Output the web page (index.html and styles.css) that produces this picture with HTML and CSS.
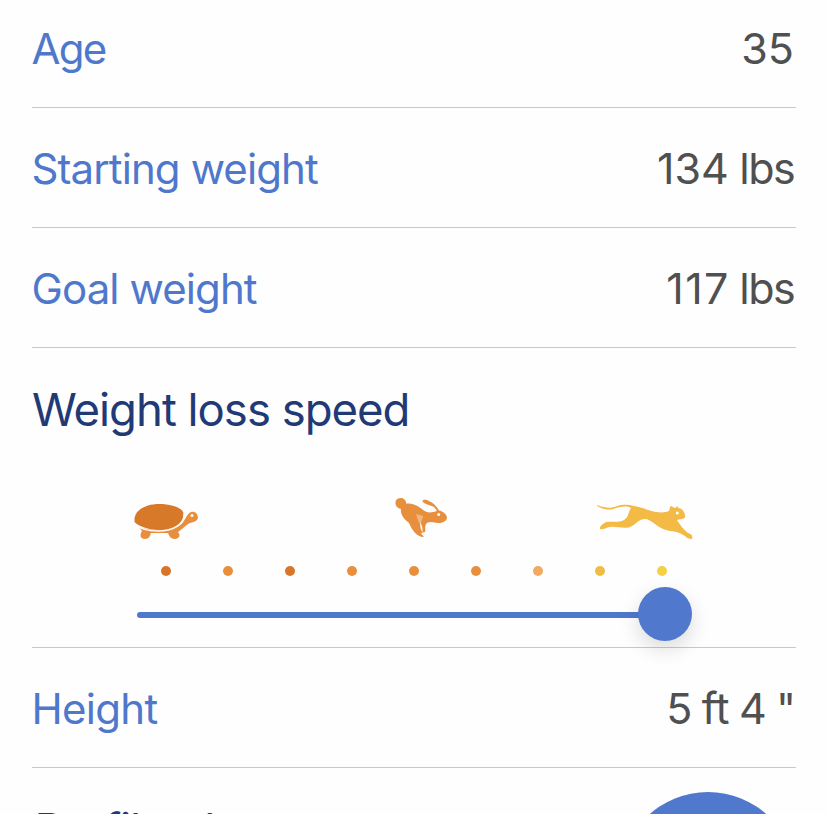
FILE: index.html
```html
<!DOCTYPE html>
<html lang="en">
<head>
<meta charset="utf-8">
<title>Profile</title>
<link rel="stylesheet" href="styles.css">
</head>
<body>
<main class="profile">
  <div class="row row-first"><span class="label age">Age</span><span class="value">35</span></div>
  <div class="row"><span class="label">Starting weight</span><span class="value">134 <span class="unit">lbs</span></span></div>
  <div class="row"><span class="label">Goal weight</span><span class="value goal">117 <span class="unit">lbs</span></span></div>
  <section class="speed">
    <h2 class="heading">Weight loss speed</h2>
    <div class="animals">
      <svg class="turtle" width="68" height="44" viewBox="132 498 68 44">
        <path fill="#e88f3d" d="M139 527C154 532 169 530 180 525C185 522 186 514 191 512C195 511 198 514 198 518C197 522 192 522 188 524C184 527 181 530 178 532C181 535 179 539 175 539C171 539 169 536 168 533L151 533C150 536 149 539 145 539C141 539 139 536 142 531Z"/>
        <path fill="#d87929" d="M134.500 518C136 509 147 504 159 504C172 504 182 508 183.500 513C184 524 174 530 158 530C149 530 138 526 134.500 522Z"/>
        <path fill="none" stroke="#fefefe" stroke-width="1.500" d="M134 524C140 529 149 531 158 531C174 531 185 524 184.300 513"/>
        <circle cx="192" cy="515.500" r="1.500" fill="#fff"/>
      </svg>
      <svg class="rabbit" width="56" height="44" viewBox="393 496 56 44">
        <path fill="#e88f3d" d="M401 498C404 498 406.500 501 406 503.500C413 503 418 506 422 509C425 512 429 513 433 512C436 511.500 437 511 436.500 510L434 507C430 505 424 504 422.500 501.500C422 499.500 426 499 429 501C434 503 437 507 439 510.500C443 511 447 515 447 517.500C447 521 443 523 438 523C434 523 431 521 427 523C424 525 426 530 425 532L421 533C422 535 424 536 423.500 537C417 537 412 530 409 523C405 520 400 515 401 509C397 508 395 505 395.500 502C396 499 398 498 401 498Z"/>
        <path fill="#fff" opacity=".35" d="M416 514L423 516C423 519 421 520 421 524L419 523Z"/>
        <path fill="#fff" opacity=".9" d="M420 522C422 525 423 529 422.500 532.500C420.500 530 420 526 420 522Z"/>
        <circle cx="438.700" cy="514.500" r="1.500" fill="#fff"/>
      </svg>
      <svg class="cheetah" width="100" height="42" viewBox="595 500 100 42">
        <path fill="#f3ba45" d="M597 505C605 508 611 509 617 506C623 504 629 505 634 506C643 507 648 511 656 512C662 513 667 512 669 511C670 508 670 506 671 506L675 508L678 506L678 508C682 508 684 511 685 515C686 519 683 519 677 520C680 525 685 531 688 533C692 534 693 537 692 539C688 539 686 537 685 536C682 534 676 531 670 531C665 530 660 528 655 524C651 521 648 519 645 519C639 519 636 524 632 526C626 530 617 526 610 527C607 527 605 530 600 529C599 527 602 524 606 522C613 521 618 523 624 520C629 517 628 512 631 508C626 505 620 507 616 508C609 511 602 509 597 506Z"/>
        <circle cx="677.300" cy="513" r="1.500" fill="#fff"/>
      </svg>
    </div>
    <div class="dots">
      <i class="dot dark"></i><i class="dot"></i><i class="dot dark"></i><i class="dot"></i><i class="dot"></i><i class="dot"></i><i class="dot peach"></i><i class="dot amber"></i><i class="dot yellow"></i>
    </div>
    <div class="slider"><div class="track"></div><div class="thumb"></div></div>
  </section>
  <div class="row"><span class="label tall">Height</span><span class="value feet">5 ft 4 "</span></div>
  <section class="photo">
    <h2 class="photo-title">Profile photo</h2>
    <div class="avatar"></div>
  </section>
</main>
</body>
</html>
```
FILE: styles.css
```css
* { box-sizing: border-box; }
html { overflow: hidden; }
body {
  margin: 0;
  height: 814px;
  overflow: hidden;
  background: #fefefe;
  font-family: Inter, "Liberation Sans", sans-serif;
}
.profile { height: 814px; padding: 0 32px; overflow: hidden; }
.row {
  display: flex;
  justify-content: space-between;
  height: 120px;
  padding: 35px 2px 0 0;
  border-bottom: 1px solid #c9c9c9;
  line-height: 52px;
  white-space: nowrap;
}
.row-first { height: 108px; padding-top: 23px; }
.label { margin-left: -0.5px; color: #4f78cc; font-size: 42px; letter-spacing: -0.9px; }
.age { letter-spacing: -1.7px; }
.tall { letter-spacing: -0.7px; }
.value { margin-top: -1px; color: #505050; font-size: 43px; letter-spacing: 0; word-spacing: -1.5px; }
.unit { letter-spacing: -1.6px; }
.goal { letter-spacing: 1.4px; word-spacing: -4px; }
.goal .unit { letter-spacing: -1.6px; }
.feet { margin-right: -1.5px; letter-spacing: -0.6px; word-spacing: -1.6px; }
.speed {
  height: 300px;
  padding-top: 34px;
  border-bottom: 1px solid #c9c9c9;
}
.heading, .photo-title {
  margin: 0;
  color: #213a76;
  font-size: 45.5px;
  font-weight: 400;
  line-height: 56px;
  letter-spacing: -1px;
  white-space: nowrap;
}
.animals {
  display: flex;
  justify-content: space-between;
  height: 46px;
  margin: 58px 101px 0 100px;
}
.animals svg { display: block; }
.turtle { margin-top: 2px; }
.rabbit { margin-left: 46px; }
.cheetah { margin-top: 4px; }
.dots {
  display: flex;
  justify-content: space-between;
  margin: 24px 129px 0;
}
.dot { width: 10px; height: 10px; border-radius: 50%; background: #e88f3d; }
.dark { background: #d87529; }
.peach { background: #f0aa62; }
.amber { background: #efbd45; }
.yellow { background: #f3d044; }
.slider {
  display: flex;
  align-items: center;
  height: 54px;
  margin: 11px 104.5px 0 105px;
}
.track {
  flex: 1;
  height: 6px;
  margin: 2px -4px 0 0;
  border-radius: 3px;
  background: #4f78cc;
}
.thumb {
  width: 54px;
  height: 54px;
  border-radius: 50%;
  background: #5078cd;
  box-shadow: 0 8px 20px rgba(0, 0, 0, 0.14);
}
.photo {
  display: flex;
  justify-content: space-between;
  align-items: flex-start;
  height: 46px;
  padding-top: 24px;
}
.photo-title { margin: 10px 0 0 2.5px; }
.avatar {
  flex: none;
  width: 176px;
  height: 176px;
  border-radius: 50%;
  background: #5078cd;
}
```
